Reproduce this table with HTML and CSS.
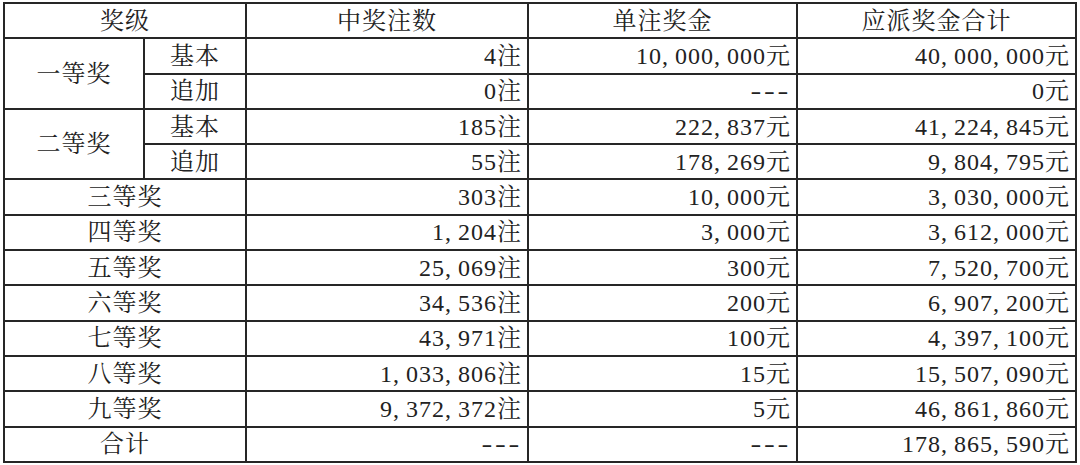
FILE: index.html
```html
<!DOCTYPE html>
<html lang="zh-CN">
<head>
<meta charset="utf-8">
<title>开奖详情</title>
<link rel="stylesheet" href="styles.css">
</head>
<body>
<table class="prize">
  <colgroup>
    <col class="c1"><col class="c2"><col class="c3"><col class="c4"><col class="c5">
  </colgroup>
  <thead>
    <tr><th colspan="2">奖级</th><th>中奖注数</th><th>单注奖金</th><th>应派奖金合计</th></tr>
  </thead>
  <tbody>
    <tr><td class="ctr" rowspan="2">一等奖</td><td class="ctr">基本</td><td class="num">4注</td><td class="num">10<span class="c">,</span>000<span class="c">,</span>000元</td><td class="num">40<span class="c">,</span>000<span class="c">,</span>000元</td></tr>
    <tr><td class="ctr">追加</td><td class="num">0注</td><td class="num"><span class="dash">---</span></td><td class="num">0元</td></tr>
    <tr><td class="ctr" rowspan="2">二等奖</td><td class="ctr">基本</td><td class="num">185注</td><td class="num">222<span class="c">,</span>837元</td><td class="num">41<span class="c">,</span>224<span class="c">,</span>845元</td></tr>
    <tr><td class="ctr">追加</td><td class="num">55注</td><td class="num">178<span class="c">,</span>269元</td><td class="num">9<span class="c">,</span>804<span class="c">,</span>795元</td></tr>
    <tr><td class="ctr" colspan="2">三等奖</td><td class="num">303注</td><td class="num">10<span class="c">,</span>000元</td><td class="num">3<span class="c">,</span>030<span class="c">,</span>000元</td></tr>
    <tr><td class="ctr" colspan="2">四等奖</td><td class="num">1<span class="c">,</span>204注</td><td class="num">3<span class="c">,</span>000元</td><td class="num">3<span class="c">,</span>612<span class="c">,</span>000元</td></tr>
    <tr><td class="ctr" colspan="2">五等奖</td><td class="num">25<span class="c">,</span>069注</td><td class="num">300元</td><td class="num">7<span class="c">,</span>520<span class="c">,</span>700元</td></tr>
    <tr><td class="ctr" colspan="2">六等奖</td><td class="num">34<span class="c">,</span>536注</td><td class="num">200元</td><td class="num">6<span class="c">,</span>907<span class="c">,</span>200元</td></tr>
    <tr><td class="ctr" colspan="2">七等奖</td><td class="num">43<span class="c">,</span>971注</td><td class="num">100元</td><td class="num">4<span class="c">,</span>397<span class="c">,</span>100元</td></tr>
    <tr><td class="ctr" colspan="2">八等奖</td><td class="num">1<span class="c">,</span>033<span class="c">,</span>806注</td><td class="num">15元</td><td class="num">15<span class="c">,</span>507<span class="c">,</span>090元</td></tr>
    <tr><td class="ctr" colspan="2">九等奖</td><td class="num">9<span class="c">,</span>372<span class="c">,</span>372注</td><td class="num">5元</td><td class="num">46<span class="c">,</span>861<span class="c">,</span>860元</td></tr>
    <tr><td class="ctr" colspan="2">合计</td><td class="num"><span class="dash">---</span></td><td class="num"><span class="dash">---</span></td><td class="num">178<span class="c">,</span>865<span class="c">,</span>590元</td></tr>
  </tbody>
</table>
</body>
</html>
```

FILE: styles.css
```css
html, body {
  margin: 0;
  padding: 0;
  background: #ffffff;
}
body {
  padding: 2px 0 0 3px;
  font-family: "Liberation Serif", "Noto Serif CJK SC", "Noto Sans CJK SC", serif;
  color: #222222;
}
.prize {
  border-collapse: collapse;
  table-layout: fixed;
  width: 1072px;
  border: 2px solid #262626;
  font-size: 24px;
  line-height: 1;
  letter-spacing: 1px;
}
.c1 { width: 140px; }
.c2 { width: 102px; }
.c3 { width: 282px; }
.c4 { width: 269px; }
.c5 { width: 279px; }
.prize th,
.prize td {
  border: 2px solid #262626;
  height: 35.3px;
  padding: 0 5px;
  box-sizing: border-box;
  vertical-align: middle;
  white-space: nowrap;
}
.prize th {
  font-weight: normal;
  text-align: center;
}
.prize td.ctr {
  text-align: center;
}
.prize td.num {
  text-align: right;
}
.c {
  padding-right: 6px;
}
.dash {
  display: inline-block;
  letter-spacing: 2px;
  transform: scaleX(1.35);
  transform-origin: right center;
}
```
